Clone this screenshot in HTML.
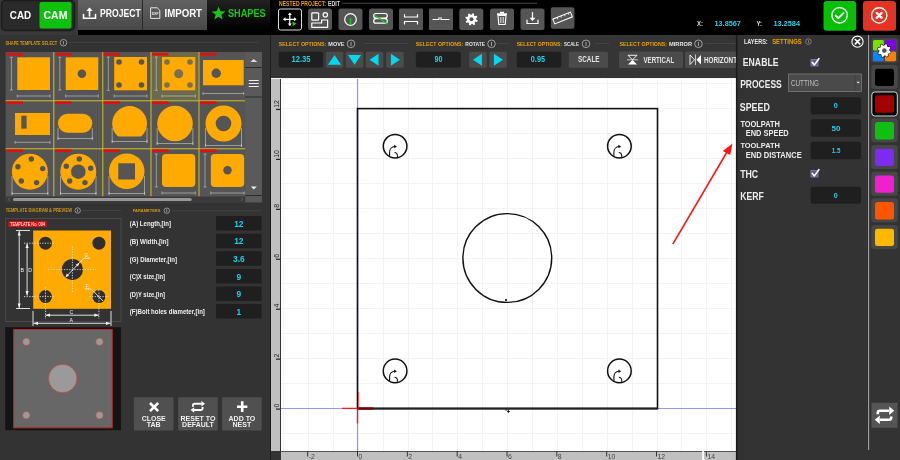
<!DOCTYPE html><html><head><meta charset="utf-8"><style>html,body{margin:0;padding:0;background:#333;overflow:hidden;width:900px;height:460px}svg{display:block;will-change:transform}text{font-family:"Liberation Sans",sans-serif}</style></head><body>
<svg width="900" height="460" viewBox="0 0 900 460">
<defs>
<linearGradient id="btn" x1="0" y1="0" x2="0" y2="1"><stop offset="0" stop-color="#626262"/><stop offset="1" stop-color="#484848"/></linearGradient>
<linearGradient id="shp" x1="0" y1="0" x2="0" y2="1"><stop offset="0" stop-color="#222"/><stop offset="1" stop-color="#000"/></linearGradient>
</defs>
<rect x="0" y="0" width="900" height="460" fill="#333"/>
<rect x="0" y="0" width="900" height="35" fill="#000"/>
<rect x="0" y="0" width="78" height="35" fill="#393939"/>
<rect x="1.5" y="0.5" width="73" height="30" rx="4" fill="#2a2a2a" stroke="#1c1c1c" stroke-width="1.5"/>
<rect x="39.5" y="2" width="32" height="26.5" rx="2" fill="#10c010"/>
<text x="9.8" y="18.8" font-size="11.48" font-weight="bold" fill="#fff" text-anchor="start" textLength="21.4" lengthAdjust="spacingAndGlyphs" >CAD</text>
<text x="43.5" y="18.8" font-size="11.48" font-weight="bold" fill="#fff" text-anchor="start" textLength="23.9" lengthAdjust="spacingAndGlyphs" >CAM</text>
<rect x="78" y="0" width="64" height="30" fill="url(#btn)"/>
<rect x="142" y="0" width="1" height="30" fill="#2a2a2a"/>
<rect x="143" y="0" width="64" height="30" fill="url(#btn)"/>
<rect x="207" y="0" width="63" height="30" fill="url(#shp)"/>
<g fill="none" stroke="#fff" stroke-width="1.6" stroke-linecap="round"><path d="M83.5 14.5 v3.8 h12 v-3.8"/><path d="M89.5 16 v-7"/></g>
<path d="M89.5 7.5 l-3.2 3.6 h6.4 z" fill="#fff"/>
<text x="100" y="16.9" font-size="10.32" font-weight="bold" fill="#fff" text-anchor="start" textLength="40.7" lengthAdjust="spacingAndGlyphs" >PROJECT</text>
<path d="M150.6 7.8 h6.6 l2.6 2.6 v8 h-9.2 z" fill="none" stroke="#e6e6e6" stroke-width="1"/>
<text x="155.2" y="14.8" font-size="3.6" font-weight="bold" fill="#eee" text-anchor="middle" textLength="6.6" lengthAdjust="spacingAndGlyphs">DXF</text>
<text x="164.5" y="16.9" font-size="10.32" font-weight="bold" fill="#fff" text-anchor="start" textLength="37.5" lengthAdjust="spacingAndGlyphs" >IMPORT</text>
<polygon points="218.50,6.60 220.26,11.37 225.35,11.58 221.35,14.73 222.73,19.62 218.50,16.80 214.27,19.62 215.65,14.73 211.65,11.58 216.74,11.37" fill="#18c818"/>
<text x="228" y="16.9" font-size="10.32" font-weight="bold" fill="#18c818" text-anchor="start" textLength="37.6" lengthAdjust="spacingAndGlyphs" >SHAPES</text>
<text x="279" y="5.6" font-size="6.4" font-weight="bold" fill="#e8a300" text-anchor="start" textLength="47" lengthAdjust="spacingAndGlyphs" >NESTED PROJECT:</text>
<text x="328" y="5.6" font-size="6.4" font-weight="bold" fill="#ddd" text-anchor="start" textLength="12" lengthAdjust="spacingAndGlyphs" >EDIT</text>
<rect x="342" y="2.8" width="195" height="0.8" fill="#555"/>
<rect x="278.5" y="9" width="23" height="21" rx="2" fill="#000" stroke="#ddd" stroke-width="1"/>
<rect x="308" y="8.5" width="24" height="21.5" rx="2.5" fill="#555"/>
<rect x="338.5" y="8.5" width="24" height="21.5" rx="2.5" fill="#555"/>
<rect x="369" y="8.5" width="24" height="21.5" rx="2.5" fill="#555"/>
<rect x="399" y="8.5" width="24" height="21.5" rx="1" fill="#555"/>
<rect x="429" y="8.5" width="24" height="21.5" rx="1" fill="#555"/>
<rect x="459.3" y="8.5" width="24" height="21.5" rx="2.5" fill="#555"/>
<rect x="490" y="8.5" width="24" height="21.5" rx="2.5" fill="#555"/>
<rect x="520.5" y="8.5" width="24" height="21.5" rx="2.5" fill="#555"/>
<rect x="550.8" y="7.3" width="23.6" height="21.5" rx="2" fill="#555"/>
<g fill="none" stroke="#fff" stroke-width="1.2" stroke-linecap="round" stroke-linejoin="round"><path d="M284 19.3 h11.6 M289.8 13.5 v11.6"/></g>
<g fill="#fff"><path d="M283 19.3 l2.5 -2 v4z M296.6 19.3 l-2.5 -2 v4z M289.8 12.5 l-2 2.5 h4z M289.8 26.1 l-2 -2.5 h4z"/></g>
<path d="M292.5 21.5 l4.2 2.2 l-4.2 2.2 z" fill="#18c818"/>
<g fill="none" stroke="#fff" stroke-width="1.2" stroke-linecap="round" stroke-linejoin="round"><rect x="311.8" y="12.8" width="6.8" height="7.4" rx="0.8"/><circle cx="325.3" cy="14.8" r="2.2"/><path d="M311.8 23 h9.8 v-3 h6 v7.3 h-15.8 z"/></g>
<g fill="none" stroke="#fff" stroke-width="1.2" stroke-linecap="round" stroke-linejoin="round"><circle cx="350.5" cy="19.5" r="5.8"/></g>
<path d="M350.5 19 v6" stroke="#18c818" stroke-width="1.5"/><circle cx="350.5" cy="19" r="1" fill="#18c818"/>
<g fill="none" stroke="#fff" stroke-width="1.2" stroke-linecap="round" stroke-linejoin="round"><path d="M376 13.5 h9 a2.3 2.3 0 0 1 0 4.6 h-9 a2.3 2.3 0 0 1 0 -4.6z M376 18.6 h9 a2.3 2.3 0 0 1 0 4.6 h-9 a2.3 2.3 0 0 1 0 -4.6z"/></g>
<path d="M374.5 15 l13 9" stroke="#18c818" stroke-width="1.3"/>
<g fill="none" stroke="#fff" stroke-width="1.2" stroke-linecap="round" stroke-linejoin="round"><path d="M404.5 14.5 v2.5 h13 v-2.5 M404.5 24 v-2.5 h13 v2.5"/></g>
<g fill="none" stroke="#fff" stroke-width="1.2" stroke-linecap="round" stroke-linejoin="round"><path d="M433 19.5 h6 v-1.8 M441 17.7 v1.8 h8"/></g>
<polygon points="477.67,20.55 477.31,21.73 475.32,21.87 474.74,22.56 474.98,24.55 473.89,25.13 472.38,23.81 471.48,23.90 470.25,25.47 469.07,25.11 468.93,23.12 468.24,22.54 466.25,22.78 465.67,21.69 466.99,20.18 466.90,19.28 465.33,18.05 465.69,16.87 467.68,16.73 468.26,16.04 468.02,14.05 469.11,13.47 470.62,14.79 471.52,14.70 472.75,13.13 473.93,13.49 474.07,15.48 474.76,16.06 476.75,15.82 477.33,16.91 476.01,18.42 476.10,19.32" fill="#fff"/>
<circle cx="471.5" cy="19.3" r="2.0" fill="#555"/>
<g fill="#fff"><rect x="497" y="13.3" width="10" height="1.6" rx="0.5"/><rect x="500" y="11.8" width="4" height="1.6"/></g>
<path d="M498 15.5 h8 l-0.8 9 h-6.4 z" fill="none" stroke="#fff" stroke-width="1.1"/>
<path d="M500.5 17 v6 M502 17 v6 M503.5 17 v6" stroke="#fff" stroke-width="0.6"/>
<g fill="none" stroke="#fff" stroke-width="1.2" stroke-linecap="round" stroke-linejoin="round"><path d="M527 20 v3.5 h11 v-3.5"/><path d="M532.5 12.5 v7"/></g>
<path d="M532.5 21 l-3 -3.3 h6 z" fill="#fff"/>
<g transform="translate(562.6,18) rotate(-22)"><rect x="-9.5" y="-2.6" width="19" height="5.2" fill="none" stroke="#fff" stroke-width="1"/><path d="M-5 -2.6 v2 M-1 -2.6 v2 M3 -2.6 v2 M7 -2.6 v2" stroke="#fff" stroke-width="0.7"/></g>
<text x="697" y="26.1" font-size="6.69" font-weight="bold" fill="#ddd" text-anchor="start" textLength="6" lengthAdjust="spacingAndGlyphs" >X:</text>
<text x="714.5" y="26.1" font-size="6.69" font-weight="bold" fill="#1fd0e8" text-anchor="start" textLength="26.4" lengthAdjust="spacingAndGlyphs" >13.8567</text>
<text x="756.4" y="26.1" font-size="6.69" font-weight="bold" fill="#ddd" text-anchor="start" textLength="5.6" lengthAdjust="spacingAndGlyphs" >Y:</text>
<text x="773.4" y="26.1" font-size="6.69" font-weight="bold" fill="#1fd0e8" text-anchor="start" textLength="26.6" lengthAdjust="spacingAndGlyphs" >13.2584</text>
<rect x="823.5" y="1" width="32.7" height="29.7" rx="3" fill="#06bf06"/>
<circle cx="839.6" cy="15.3" r="7.7" fill="none" stroke="#fff" stroke-width="1.4"/>
<path d="M835.6 15.6 l2.8 2.6 l5 -5" fill="none" stroke="#fff" stroke-width="1.9" stroke-linecap="round" stroke-linejoin="round"/>
<rect x="863" y="1" width="33" height="29.7" rx="3" fill="#e43322"/>
<circle cx="879.2" cy="15.4" r="7.7" fill="none" stroke="#fff" stroke-width="1.4"/>
<path d="M876.7 12.9 l5 5 M881.7 12.9 l-5 5" fill="none" stroke="#fff" stroke-width="2.2" stroke-linecap="round"/>
<rect x="270" y="35" width="1" height="425" fill="#1e1e1e"/>
<rect x="271" y="35" width="465" height="43" fill="#353535"/>
<text x="278.7" y="45.8" font-size="6.1" font-weight="bold" fill="#e8a300" text-anchor="start" textLength="47.6" lengthAdjust="spacingAndGlyphs" >SELECT OPTIONS:</text>
<text x="328.3" y="45.8" font-size="6.1" font-weight="bold" fill="#e6e6e6" text-anchor="start" textLength="16.2" lengthAdjust="spacingAndGlyphs" >MOVE</text>
<circle cx="351" cy="43.8" r="3.8" fill="none" stroke="#ccc" stroke-width="0.7"/>
<rect x="350.65" y="41.9" width="0.7" height="3.9899999999999998" fill="#ccc"/>
<rect x="364" y="43.1" width="44" height="0.7" fill="#4a4a4a"/>
<text x="415.8" y="45.8" font-size="6.1" font-weight="bold" fill="#e8a300" text-anchor="start" textLength="47.5" lengthAdjust="spacingAndGlyphs" >SELECT OPTIONS:</text>
<text x="465.3" y="45.8" font-size="6.1" font-weight="bold" fill="#e6e6e6" text-anchor="start" textLength="19.7" lengthAdjust="spacingAndGlyphs" >ROTATE</text>
<circle cx="491.5" cy="43.8" r="3.8" fill="none" stroke="#ccc" stroke-width="0.7"/>
<rect x="491.15" y="41.9" width="0.7" height="3.9899999999999998" fill="#ccc"/>
<rect x="497" y="43.1" width="12" height="0.7" fill="#4a4a4a"/>
<text x="516.7" y="45.8" font-size="6.1" font-weight="bold" fill="#e8a300" text-anchor="start" textLength="45.3" lengthAdjust="spacingAndGlyphs" >SELECT OPTIONS:</text>
<text x="564" y="45.8" font-size="6.1" font-weight="bold" fill="#e6e6e6" text-anchor="start" textLength="15" lengthAdjust="spacingAndGlyphs" >SCALE</text>
<circle cx="586" cy="43.8" r="3.8" fill="none" stroke="#ccc" stroke-width="0.7"/>
<rect x="585.65" y="41.9" width="0.7" height="3.9899999999999998" fill="#ccc"/>
<rect x="595" y="43.1" width="14" height="0.7" fill="#4a4a4a"/>
<text x="619.4" y="45.8" font-size="6.1" font-weight="bold" fill="#e8a300" text-anchor="start" textLength="47.6" lengthAdjust="spacingAndGlyphs" >SELECT OPTIONS:</text>
<text x="669" y="45.8" font-size="6.1" font-weight="bold" fill="#e6e6e6" text-anchor="start" textLength="23" lengthAdjust="spacingAndGlyphs" >MIRROR</text>
<circle cx="698.5" cy="43.8" r="3.8" fill="none" stroke="#ccc" stroke-width="0.7"/>
<rect x="698.15" y="41.9" width="0.7" height="3.9899999999999998" fill="#ccc"/>
<rect x="705" y="43.1" width="31" height="0.7" fill="#4a4a4a"/>
<rect x="278.7" y="51.7" width="44.30000000000001" height="15.799999999999997" rx="2" fill="#1f1f1f"/>
<text x="291.5" y="62.0" font-size="8.43" font-weight="bold" fill="#1fd0e8" text-anchor="start" textLength="19.0" lengthAdjust="spacingAndGlyphs" >12.35</text>
<rect x="325.8" y="51.7" width="17.5" height="16" rx="1.5" fill="#4b4b4b"/>
<path d="M327.95 64.7 L334.55 54.900000000000006 L341.15000000000003 64.7z" fill="#00d8f0"/>
<rect x="345.8" y="51.7" width="17.5" height="16" rx="1.5" fill="#4b4b4b"/>
<path d="M347.95 55.1 L354.55 64.7 L361.15000000000003 55.1z" fill="#00d8f0"/>
<rect x="365.8" y="51.7" width="17.5" height="16" rx="1.5" fill="#4b4b4b"/>
<path d="M378.55 53.7 L369.55 59.7 L378.55 65.7z" fill="#00d8f0"/>
<rect x="386.2" y="51.7" width="17.5" height="16" rx="1.5" fill="#4b4b4b"/>
<path d="M390.95 53.7 L399.95 59.7 L390.95 65.7z" fill="#00d8f0"/>
<rect x="415.8" y="51.7" width="45.0" height="15.799999999999997" rx="2" fill="#1f1f1f"/>
<text x="434.5" y="62.0" font-size="8.43" font-weight="bold" fill="#1fd0e8" text-anchor="start" textLength="8.0" lengthAdjust="spacingAndGlyphs" >90</text>
<rect x="469.2" y="51.7" width="17.5" height="16" rx="1.5" fill="#4b4b4b"/>
<path d="M481.95 53.7 L472.95 59.7 L481.95 65.7z" fill="#00d8f0"/>
<rect x="489.2" y="51.7" width="17.5" height="16" rx="1.5" fill="#4b4b4b"/>
<path d="M493.95 53.7 L502.95 59.7 L493.95 65.7z" fill="#00d8f0"/>
<rect x="516.7" y="51.7" width="44.59999999999991" height="15.799999999999997" rx="2" fill="#1f1f1f"/>
<text x="530.8" y="62.0" font-size="8.43" font-weight="bold" fill="#1fd0e8" text-anchor="start" textLength="14.2" lengthAdjust="spacingAndGlyphs" >0.95</text>
<rect x="568.8" y="51.7" width="39.2" height="16" rx="1.5" fill="#4b4b4b"/>
<text x="578" y="62.0" font-size="8.43" font-weight="bold" fill="#e6e6e6" text-anchor="start" textLength="21.5" lengthAdjust="spacingAndGlyphs" >SCALE</text>
<rect x="619" y="51.6" width="64" height="16.4" rx="1.5" fill="#4b4b4b"/>
<path d="M628 55.3 h9 l-4.5 4.5z" fill="none" stroke="#fff" stroke-width="0.9"/>
<path d="M627 59.8 h11" stroke="#fff" stroke-width="0.7"/>
<path d="M628 64.6 h9 l-4.5 -4.5z" fill="#fff"/>
<text x="643.5" y="62.5" font-size="8.43" font-weight="bold" fill="#e6e6e6" text-anchor="start" textLength="30.7" lengthAdjust="spacingAndGlyphs" >VERTICAL</text>
<clipPath id="optclip"><rect x="271" y="35" width="465" height="43"/></clipPath><g clip-path="url(#optclip)">
<rect x="685.1" y="51.6" width="60" height="16.4" rx="1.5" fill="#4b4b4b"/>
<path d="M690 55 v9.5 l4.5 -4.75z" fill="none" stroke="#fff" stroke-width="0.9"/>
<path d="M695.5 54.5 v10.5" stroke="#fff" stroke-width="0.7"/>
<path d="M701 55 v9.5 l-4.5 -4.75z" fill="#fff"/>
<text x="704" y="62.5" font-size="8.43" font-weight="bold" fill="#e6e6e6" text-anchor="start" textLength="41" lengthAdjust="spacingAndGlyphs" >HORIZONTAL</text>
</g>
<rect x="736.2" y="35" width="1" height="425" fill="#1e1e1e"/>
<rect x="271" y="78" width="465.5" height="382" fill="#fff"/>
<path d="M283.5 78V451 M308.5 78V451 M333.5 78V451 M358.5 78V451 M383.5 78V451 M408.5 78V451 M432.5 78V451 M457.5 78V451 M482.5 78V451 M507.5 78V451 M532.5 78V451 M557.5 78V451 M582.5 78V451 M607.5 78V451 M632.5 78V451 M657.5 78V451 M681.5 78V451 M706.5 78V451 M731.5 78V451 M281 433.5H736 M281 408.5H736 M281 383.5H736 M281 358.5H736 M281 333.5H736 M281 308.5H736 M281 283.5H736 M281 258.5H736 M281 233.5H736 M281 208.5H736 M281 183.5H736 M281 158.5H736 M281 133.5H736 M281 108.5H736 M281 83.5H736" stroke="#f3f3f3" stroke-width="1" fill="none"/>
<path d="M357.5 78V451 M281 408.5H736" stroke="#9494ff" stroke-width="1.2" fill="none"/>
<rect x="357.5" y="108.6" width="300" height="300" fill="none" stroke="#111" stroke-width="1.6"/><path d="M357.5 408.5 H657.5" stroke="#222" stroke-width="2.2"/>
<circle cx="507.3" cy="258" r="44.4" fill="none" stroke="#111" stroke-width="1.4"/>
<circle cx="395.1" cy="146.2" r="11.8" fill="none" stroke="#111" stroke-width="1.5"/>
<path d="M389.6 156.7 V152.0 A5.5 5.5 0 0 1 394.6 146.5" fill="none" stroke="#111" stroke-width="1.1"/>
<path d="M396.90000000000003 146.5 L393.90000000000003 144.7 L394.3 148.2z" fill="#111"/>
<path d="M394.5 152.5 A2.8 2.8 0 0 1 397.40000000000003 155.39999999999998 V157.0" fill="none" stroke="#111" stroke-width="1.1"/>
<circle cx="619.4" cy="146.2" r="11.8" fill="none" stroke="#111" stroke-width="1.5"/>
<path d="M613.9 156.7 V152.0 A5.5 5.5 0 0 1 618.9 146.5" fill="none" stroke="#111" stroke-width="1.1"/>
<path d="M621.1999999999999 146.5 L618.1999999999999 144.7 L618.6 148.2z" fill="#111"/>
<path d="M618.8 152.5 A2.8 2.8 0 0 1 621.6999999999999 155.39999999999998 V157.0" fill="none" stroke="#111" stroke-width="1.1"/>
<circle cx="395.1" cy="370.9" r="11.8" fill="none" stroke="#111" stroke-width="1.5"/>
<path d="M389.6 381.4 V376.7 A5.5 5.5 0 0 1 394.6 371.2" fill="none" stroke="#111" stroke-width="1.1"/>
<path d="M396.90000000000003 371.2 L393.90000000000003 369.4 L394.3 372.9z" fill="#111"/>
<path d="M394.5 377.2 A2.8 2.8 0 0 1 397.40000000000003 380.09999999999997 V381.7" fill="none" stroke="#111" stroke-width="1.1"/>
<circle cx="619.4" cy="370.9" r="11.8" fill="none" stroke="#111" stroke-width="1.5"/>
<path d="M613.9 381.4 V376.7 A5.5 5.5 0 0 1 618.9 371.2" fill="none" stroke="#111" stroke-width="1.1"/>
<path d="M621.1999999999999 371.2 L618.1999999999999 369.4 L618.6 372.9z" fill="#111"/>
<path d="M618.8 377.2 A2.8 2.8 0 0 1 621.6999999999999 380.09999999999997 V381.7" fill="none" stroke="#111" stroke-width="1.1"/>
<circle cx="506" cy="300" r="1.1" fill="#111"/>
<path d="M505 410 h2.5 M508.5 409.5 v2.2" stroke="#111" stroke-width="0.8"/><path d="M506.8 411 h3.4 l-1.7 2z" fill="#111"/>
<path d="M342 408.4 H357.5 M357.5 408.5 V423.6" stroke="#ff1a1a" stroke-width="1.4" fill="none"/>
<path d="M358.6 392 V408" stroke="#ff3030" stroke-width="0.8" fill="none"/>
<path d="M357.5 408.5 H373.5" stroke="#7a0000" stroke-width="2.2" fill="none"/>
<path d="M672.8 244.2 L727 152" stroke="#ff1414" stroke-width="1.6" fill="none"/>
<path d="M732.5 143.5 L722.8 151 L730.2 155z" fill="#ff1414"/>
<rect x="271" y="79" width="9" height="372" fill="#c0c0c0"/>
<rect x="280" y="79" width="1" height="372" fill="#333"/>
<rect x="271" y="78" width="465" height="1" fill="#f4f4f4"/>
<rect x="281" y="451" width="455" height="1" fill="#555"/>
<rect x="281" y="452" width="455" height="8" fill="#c0c0c0"/>
<rect x="271" y="451" width="10" height="9" fill="#333"/>
<rect x="276" y="108.86" width="4" height="1.2" fill="#222"/>
<text x="0" y="0" font-size="7" fill="#222" transform="translate(279,107.86) rotate(-90)">12</text>
<rect x="276" y="158.8" width="4" height="1.2" fill="#222"/>
<text x="0" y="0" font-size="7" fill="#222" transform="translate(279,157.8) rotate(-90)">10</text>
<rect x="276" y="208.74" width="4" height="1.2" fill="#222"/>
<text x="0" y="0" font-size="7" fill="#222" transform="translate(279,207.74) rotate(-90)">8</text>
<rect x="276" y="258.68" width="4" height="1.2" fill="#222"/>
<text x="0" y="0" font-size="7" fill="#222" transform="translate(279,257.68) rotate(-90)">6</text>
<rect x="276" y="308.62" width="4" height="1.2" fill="#222"/>
<text x="0" y="0" font-size="7" fill="#222" transform="translate(279,307.62) rotate(-90)">4</text>
<rect x="276" y="358.56" width="4" height="1.2" fill="#222"/>
<text x="0" y="0" font-size="7" fill="#222" transform="translate(279,357.56) rotate(-90)">2</text>
<rect x="276" y="408.5" width="4" height="1.2" fill="#222"/>
<text x="0" y="0" font-size="7" fill="#222" transform="translate(279,407.5) rotate(-90)">0</text>
<rect x="307.16" y="451" width="1" height="5.5" fill="#333"/>
<text x="308.66" y="459.2" font-size="6.8" fill="#444">-2</text>
<rect x="357.0" y="451" width="1" height="5.5" fill="#333"/>
<text x="358.5" y="459.2" font-size="6.8" fill="#444">0</text>
<rect x="406.84" y="451" width="1" height="5.5" fill="#333"/>
<text x="408.34" y="459.2" font-size="6.8" fill="#444">2</text>
<rect x="456.68" y="451" width="1" height="5.5" fill="#333"/>
<text x="458.18" y="459.2" font-size="6.8" fill="#444">4</text>
<rect x="506.52" y="451" width="1" height="5.5" fill="#333"/>
<text x="508.02" y="459.2" font-size="6.8" fill="#444">6</text>
<rect x="556.36" y="451" width="1" height="5.5" fill="#333"/>
<text x="557.86" y="459.2" font-size="6.8" fill="#444">8</text>
<rect x="606.2" y="451" width="1" height="5.5" fill="#333"/>
<text x="607.7" y="459.2" font-size="6.8" fill="#444">10</text>
<rect x="656.04" y="451" width="1" height="5.5" fill="#333"/>
<text x="657.54" y="459.2" font-size="6.8" fill="#444">12</text>
<rect x="705.88" y="451" width="1" height="5.5" fill="#333"/>
<text x="707.38" y="459.2" font-size="6.8" fill="#444">14</text>
<rect x="702.2" y="451" width="1.7" height="9" fill="#fff"/>
<rect x="737" y="35" width="131" height="425" fill="#333"/>
<rect x="735.9" y="35" width="1.5" height="425" fill="#1c1c1c"/>
<rect x="868" y="35" width="1.4" height="415" fill="#9a9a9a"/>
<text x="744" y="44" font-size="6.98" font-weight="bold" fill="#e6e6e6" text-anchor="start" textLength="23.7" lengthAdjust="spacingAndGlyphs" >LAYERS:</text>
<text x="772.2" y="44" font-size="6.98" font-weight="bold" fill="#e8a300" text-anchor="start" textLength="29.5" lengthAdjust="spacingAndGlyphs" >SETTINGS</text>
<circle cx="808.4" cy="41.6" r="2.8" fill="none" stroke="#999" stroke-width="0.7"/>
<rect x="808.05" y="40.2" width="0.7" height="2.94" fill="#999"/>
<circle cx="857.5" cy="41.7" r="5.6" fill="none" stroke="#fff" stroke-width="1.1"/>
<path d="M855.3 39.5 l4.4 4.4 M859.7 39.5 l-4.4 4.4" stroke="#fff" stroke-width="1.6" stroke-linecap="round"/>
<text x="742.8" y="65.7" font-size="10.17" font-weight="bold" fill="#ececec" text-anchor="start" textLength="35.7" lengthAdjust="spacingAndGlyphs" >ENABLE</text>
<rect x="811" y="59.5" width="7" height="6.5" fill="#5a5a8c" stroke="#8080b8" stroke-width="0.8"/>
<path d="M812.2 62.3 l2.2 2.6 l4.5 -6.2" fill="none" stroke="#fff" stroke-width="1.6" stroke-linecap="round" stroke-linejoin="round"/>
<text x="740.2" y="88.2" font-size="10.9" font-weight="bold" fill="#ececec" text-anchor="start" textLength="41.6" lengthAdjust="spacingAndGlyphs" >PROCESS</text>
<rect x="788.5" y="74" width="73" height="17.5" fill="#4a4a4a" stroke="#7a7a7a" stroke-width="0.8"/>
<rect x="854.8" y="74.5" width="0.6" height="16.5" fill="#3a3a3a"/>
<path d="M856.5 81.8 h3.4 l-1.7 1.8z" fill="#eee"/>
<text x="791" y="85.5" font-size="8.72" font-weight="normal" fill="#bdbdbd" text-anchor="start" textLength="28" lengthAdjust="spacingAndGlyphs" >CUTTING</text>
<text x="739.8" y="110.7" font-size="10.9" font-weight="bold" fill="#ececec" text-anchor="start" textLength="30.0" lengthAdjust="spacingAndGlyphs" >SPEED</text>
<rect x="810.7" y="97.2" width="50.3" height="17.299999999999997" rx="2" fill="#1f1f1f"/>
<text x="833.8" y="108.44999999999999" font-size="7.56" font-weight="bold" fill="#1fd0e8" text-anchor="start" textLength="4.0" lengthAdjust="spacingAndGlyphs" >0</text>
<text x="740.4" y="126.5" font-size="8.28" font-weight="bold" fill="#ececec" text-anchor="start" textLength="39.6" lengthAdjust="spacingAndGlyphs" >TOOLPATH</text>
<text x="745.8" y="135.8" font-size="8.14" font-weight="bold" fill="#ececec" text-anchor="start" textLength="42.9" lengthAdjust="spacingAndGlyphs" >END SPEED</text>
<rect x="810.7" y="119.3" width="50.3" height="17.39999999999999" rx="2" fill="#1f1f1f"/>
<text x="831.5" y="130.6" font-size="7.56" font-weight="bold" fill="#1fd0e8" text-anchor="start" textLength="9.0" lengthAdjust="spacingAndGlyphs" >50</text>
<text x="740.4" y="148.2" font-size="7.99" font-weight="bold" fill="#ececec" text-anchor="start" textLength="39.6" lengthAdjust="spacingAndGlyphs" >TOOLPATH</text>
<text x="745.8" y="157.8" font-size="8.43" font-weight="bold" fill="#ececec" text-anchor="start" textLength="55.9" lengthAdjust="spacingAndGlyphs" >END DISTANCE</text>
<rect x="810.7" y="141.8" width="50.3" height="17.399999999999977" rx="2" fill="#1f1f1f"/>
<text x="831.8" y="153.1" font-size="7.56" font-weight="bold" fill="#1fd0e8" text-anchor="start" textLength="8.7" lengthAdjust="spacingAndGlyphs" >1.5</text>
<text x="740.2" y="177.8" font-size="10.76" font-weight="bold" fill="#ececec" text-anchor="start" textLength="18.0" lengthAdjust="spacingAndGlyphs" >THC</text>
<rect x="811" y="170.5" width="7" height="6.5" fill="#5a5a8c" stroke="#8080b8" stroke-width="0.8"/>
<path d="M812.2 173.3 l2.2 2.6 l4.5 -6.2" fill="none" stroke="#fff" stroke-width="1.6" stroke-linecap="round" stroke-linejoin="round"/>
<text x="740.2" y="200" font-size="10.9" font-weight="bold" fill="#ececec" text-anchor="start" textLength="23.6" lengthAdjust="spacingAndGlyphs" >KERF</text>
<rect x="810.7" y="186.8" width="50.3" height="16.899999999999977" rx="2" fill="#1f1f1f"/>
<text x="833.8" y="197.85" font-size="7.56" font-weight="bold" fill="#1fd0e8" text-anchor="start" textLength="4.0" lengthAdjust="spacingAndGlyphs" >0</text>
<rect x="869.4" y="35" width="30.6" height="425" fill="#333"/>
<rect x="871.3" y="38.2" width="26.5" height="24.4" rx="2.5" fill="#474747"/>
<rect x="873" y="40" width="10.8" height="10.5" rx="1.5" fill="#78e000"/>
<rect x="885" y="40" width="11" height="10.5" rx="1.5" fill="#8000f0"/>
<rect x="873" y="51.5" width="10.8" height="9.8" rx="1.5" fill="#0a84ff"/>
<rect x="885" y="51.5" width="11" height="9.8" rx="1.5" fill="#ff8000"/>
<polygon points="890.77,51.91 890.39,53.15 888.45,53.39 887.82,54.15 887.95,56.10 886.80,56.71 885.26,55.51 884.28,55.60 882.99,57.07 881.75,56.69 881.51,54.75 880.75,54.12 878.80,54.25 878.19,53.10 879.39,51.56 879.30,50.58 877.83,49.29 878.21,48.05 880.15,47.81 880.78,47.05 880.65,45.10 881.80,44.49 883.34,45.69 884.32,45.60 885.61,44.13 886.85,44.51 887.09,46.45 887.85,47.08 889.80,46.95 890.41,48.10 889.21,49.64 889.30,50.62" fill="#111" stroke="#111" stroke-width="1.4" stroke-linejoin="round" opacity="0.85"/>
<polygon points="890.77,51.91 890.39,53.15 888.45,53.39 887.82,54.15 887.95,56.10 886.80,56.71 885.26,55.51 884.28,55.60 882.99,57.07 881.75,56.69 881.51,54.75 880.75,54.12 878.80,54.25 878.19,53.10 879.39,51.56 879.30,50.58 877.83,49.29 878.21,48.05 880.15,47.81 880.78,47.05 880.65,45.10 881.80,44.49 883.34,45.69 884.32,45.60 885.61,44.13 886.85,44.51 887.09,46.45 887.85,47.08 889.80,46.95 890.41,48.10 889.21,49.64 889.30,50.62" fill="#fff"/>
<circle cx="884.3" cy="50.6" r="2.3" fill="#555"/>
<rect x="871.3" y="65.0" width="26.5" height="24" rx="3" fill="#474747"/>
<rect x="875" y="68.7" width="19" height="17.4" rx="2.5" fill="#000000"/>
<rect x="871.8" y="91.97" width="25.5" height="24" rx="3" fill="#000" stroke="#d8d8d8" stroke-width="1"/>
<rect x="875" y="95.37" width="19" height="17.4" rx="2.5" fill="#a40000"/>
<rect x="871.3" y="118.34" width="26.5" height="24" rx="3" fill="#474747"/>
<rect x="875" y="122.04" width="19" height="17.4" rx="2.5" fill="#10c010"/>
<rect x="871.3" y="145.01" width="26.5" height="24" rx="3" fill="#474747"/>
<rect x="875" y="148.70999999999998" width="19" height="17.4" rx="2.5" fill="#7b2cf0"/>
<rect x="871.3" y="171.68" width="26.5" height="24" rx="3" fill="#474747"/>
<rect x="875" y="175.38" width="19" height="17.4" rx="2.5" fill="#f020d0"/>
<rect x="871.3" y="198.35" width="26.5" height="24" rx="3" fill="#474747"/>
<rect x="875" y="202.04999999999998" width="19" height="17.4" rx="2.5" fill="#ff5500"/>
<rect x="871.3" y="225.02" width="26.5" height="24" rx="3" fill="#474747"/>
<rect x="875" y="228.72" width="19" height="17.4" rx="2.5" fill="#ffb800"/>
<rect x="871.5" y="402.8" width="26" height="25" fill="#555"/>
<g fill="none" stroke="#fff" stroke-width="2.6" stroke-linejoin="round"><path d="M889 410.8 h-9 a2.2 2.2 0 0 0 -2.2 2.2 v1.2"/><path d="M880 419.8 h9 a2.2 2.2 0 0 0 2.2 -2.2 v-1.2"/></g>
<path d="M894.2 410.8 l-5 -4.2 v8.4z M874.8 419.8 l5 -4.2 v8.4z" fill="#fff"/>
<text x="5.4" y="44.6" font-size="5.38" font-weight="bold" fill="#d49a10" text-anchor="start" textLength="51.8" lengthAdjust="spacingAndGlyphs" >SHAPE TEMPLATE SELECT</text>
<circle cx="63.5" cy="42.7" r="3.3" fill="none" stroke="#bbb" stroke-width="0.7"/>
<rect x="63.15" y="41.050000000000004" width="0.7" height="3.465" fill="#bbb"/>
<rect x="69" y="42.4" width="189" height="0.7" fill="#4a4a4a"/>
<rect x="5.6" y="52" width="256.4" height="150.3" fill="#555"/>
<rect x="151" y="52" width="47.5" height="48.5" fill="#6b6a4c"/>
<rect x="53.3" y="52" width="1" height="144.5" fill="#c8c22a"/>
<rect x="102.3" y="52" width="1" height="144.5" fill="#c8c22a"/>
<rect x="150.5" y="52" width="1" height="144.5" fill="#c8c22a"/>
<rect x="198.5" y="52" width="1" height="144.5" fill="#c8c22a"/>
<rect x="5.6" y="100.3" width="239.6" height="1" fill="#c8c22a"/>
<rect x="5.6" y="148.3" width="239.6" height="1" fill="#c8c22a"/>
<rect x="245.3" y="52" width="16.5" height="150.3" fill="#5a5a5a"/>
<rect x="245.3" y="67" width="16.5" height="1" fill="#2a2a2a"/>
<rect x="245.3" y="96.5" width="16.5" height="1" fill="#2a2a2a"/>
<rect x="245.3" y="195" width="16.5" height="1" fill="#2a2a2a"/>
<path d="M250.3 62 h7 l-3.5 -3z" fill="#ddd"/>
<path d="M248.8 80.5 h10 M248.8 83.5 h10 M248.8 86.5 h10" stroke="#eee" stroke-width="1.1"/>
<path d="M250.8 186.5 h6 l-3 3z" fill="#eee"/>
<rect x="5.6" y="196.5" width="239.7" height="5.8" fill="#3a3a3a"/>
<rect x="13" y="198" width="178.7" height="3" rx="1.5" fill="#969696"/>
<path d="M10 197.8 l-1.8 1.6 l1.8 1.6" fill="none" stroke="#777" stroke-width="0.6"/>
<path d="M241 197.8 l1.8 1.6 l-1.8 1.6" fill="none" stroke="#777" stroke-width="0.6"/>
<rect x="6.6" y="52.9" width="16.4" height="2.7" fill="#e01010"/>
<rect x="55.1" y="52.9" width="16.4" height="2.7" fill="#e01010"/>
<rect x="103.6" y="52.9" width="16.4" height="2.7" fill="#e01010"/>
<rect x="152.1" y="52.9" width="16.4" height="2.7" fill="#e01010"/>
<rect x="200.1" y="52.9" width="16.4" height="2.7" fill="#e01010"/>
<rect x="6.6" y="101.4" width="16.4" height="2.7" fill="#e01010"/>
<rect x="55.1" y="101.4" width="16.4" height="2.7" fill="#e01010"/>
<rect x="103.6" y="101.4" width="16.4" height="2.7" fill="#e01010"/>
<rect x="152.1" y="101.4" width="16.4" height="2.7" fill="#e01010"/>
<rect x="200.1" y="101.4" width="16.4" height="2.7" fill="#e01010"/>
<rect x="6.6" y="149.4" width="16.4" height="2.7" fill="#e01010"/>
<rect x="55.1" y="149.4" width="16.4" height="2.7" fill="#e01010"/>
<rect x="103.6" y="149.4" width="16.4" height="2.7" fill="#e01010"/>
<rect x="152.1" y="149.4" width="16.4" height="2.7" fill="#e01010"/>
<rect x="200.1" y="149.4" width="16.4" height="2.7" fill="#e01010"/>
<rect x="17.3" y="57.3" width="32.7" height="32.7" fill="#ffaa00"/>
<path d="M11.4 57.3 V90 M9.9 57.3 h3 M9.9 90 h3" stroke="#e0e0e0" stroke-width="0.5" fill="none"/>
<path d="M17.3 96 H50 M17.3 94.5 v3 M50 94.5 v3" stroke="#e0e0e0" stroke-width="0.5" fill="none"/>
<rect x="65.7" y="57.3" width="32.6" height="32.7" fill="#ffaa00"/>
<circle cx="81.9" cy="73.7" r="4.3" fill="#555"/>
<path d="M59.8 57.3 V90 M58.3 57.3 h3 M58.3 90 h3" stroke="#e0e0e0" stroke-width="0.5" fill="none"/>
<path d="M65.7 96 H98.3 M65.7 94.5 v3 M98.3 94.5 v3" stroke="#e0e0e0" stroke-width="0.5" fill="none"/>
<rect x="114.2" y="57" width="32.8" height="33.3" fill="#ffaa00"/>
<circle cx="119" cy="62" r="2.8" fill="#555"/>
<circle cx="141.5" cy="62" r="2.8" fill="#555"/>
<circle cx="119" cy="85" r="2.8" fill="#555"/>
<circle cx="141.5" cy="85" r="2.8" fill="#555"/>
<path d="M108.3 57 V90.3 M106.8 57 h3 M106.8 90.3 h3" stroke="#e0e0e0" stroke-width="0.5" fill="none"/>
<path d="M114.2 96 H147 M114.2 94.5 v3 M147 94.5 v3" stroke="#e0e0e0" stroke-width="0.5" fill="none"/>
<rect x="162" y="57" width="33.3" height="33.3" fill="#ffaa00"/>
<circle cx="167" cy="62" r="2.8" fill="#777055"/>
<circle cx="190" cy="62" r="2.8" fill="#777055"/>
<circle cx="167" cy="85" r="2.8" fill="#777055"/>
<circle cx="190" cy="85" r="2.8" fill="#777055"/>
<circle cx="178.7" cy="73.7" r="4.5" fill="#777055"/>
<path d="M156.3 57 V90.3 M154.8 57 h3 M154.8 90.3 h3" stroke="#e0e0e0" stroke-width="0.5" fill="none"/>
<path d="M162 96 H195.3 M162 94.5 v3 M195.3 94.5 v3" stroke="#e0e0e0" stroke-width="0.5" fill="none"/>
<rect x="203" y="60" width="40.7" height="25.3" fill="#ffaa00"/>
<circle cx="216.2" cy="73.3" r="4.7" fill="#555"/>
<path d="M203 93.5 H243.7 M203 92.0 v3 M243.7 92.0 v3" stroke="#e0e0e0" stroke-width="0.5" fill="none"/>
<rect x="15" y="113" width="35" height="22" fill="#ffaa00"/>
<rect x="21.3" y="115.7" width="5.3" height="13" fill="#555"/>
<path d="M15 142.3 H50 M15 140.8 v3 M50 140.8 v3" stroke="#e0e0e0" stroke-width="0.5" fill="none"/>
<rect x="58" y="113.7" width="34.3" height="19" rx="9.5" fill="#ffaa00"/>
<path d="M58 138.5 H92.3 M58 137.0 v3 M92.3 137.0 v3" stroke="#e0e0e0" stroke-width="0.5" fill="none"/>
<path d="M58 128 V139.5 M92.3 128 V139.5" stroke="#e0e0e0" stroke-width="0.5" fill="none"/>
<clipPath id="c8"><rect x="100" y="100" width="50" height="36.4"/></clipPath><circle cx="129.6" cy="123.5" r="17.4" fill="#ffaa00" clip-path="url(#c8)"/>
<path d="M112.2 141.5 H147 M112.2 140.0 v3 M147 140.0 v3" stroke="#e0e0e0" stroke-width="0.5" fill="none"/>
<path d="M112.2 128 V142.5 M147 128 V142.5" stroke="#e0e0e0" stroke-width="0.5" fill="none"/>
<circle cx="175" cy="123.5" r="17.8" fill="#ffaa00"/>
<path d="M157.2 143.5 H192.8 M157.2 142.0 v3 M192.8 142.0 v3" stroke="#e0e0e0" stroke-width="0.5" fill="none"/>
<path d="M157.2 128 V144.5 M192.8 128 V144.5" stroke="#e0e0e0" stroke-width="0.5" fill="none"/>
<circle cx="223.5" cy="123.5" r="18" fill="#ffaa00"/><circle cx="223.5" cy="123.5" r="7.8" fill="#555"/>
<path d="M205.5 145.5 H241.5 M205.5 144.0 v3 M241.5 144.0 v3" stroke="#e0e0e0" stroke-width="0.5" fill="none"/>
<path d="M205.5 128 V146.5 M241.5 128 V146.5" stroke="#e0e0e0" stroke-width="0.5" fill="none"/>
<circle cx="29.9" cy="171.7" r="18" fill="#ffaa00"/>
<circle cx="31.3" cy="159" r="2.7" fill="#555"/>
<circle cx="17.9" cy="166.7" r="2.7" fill="#555"/>
<circle cx="42.7" cy="168.6" r="2.7" fill="#555"/>
<circle cx="21.3" cy="181" r="2.7" fill="#555"/>
<circle cx="36.6" cy="182.6" r="2.7" fill="#555"/>
<path d="M12 193.5 H47.8 M12 192.0 v3 M47.8 192.0 v3" stroke="#e0e0e0" stroke-width="0.5" fill="none"/>
<path d="M12 176 V194.5 M47.8 176 V194.5" stroke="#e0e0e0" stroke-width="0.5" fill="none"/>
<circle cx="78.3" cy="171.7" r="18" fill="#ffaa00"/><circle cx="78.3" cy="171.7" r="7.3" fill="#555"/>
<circle cx="79.3" cy="159" r="2.7" fill="#555"/>
<circle cx="66.3" cy="166.3" r="2.7" fill="#555"/>
<circle cx="90.7" cy="168.2" r="2.7" fill="#555"/>
<circle cx="69.7" cy="181" r="2.7" fill="#555"/>
<circle cx="85" cy="182.6" r="2.7" fill="#555"/>
<path d="M60.5 193.5 H96 M60.5 192.0 v3 M96 192.0 v3" stroke="#e0e0e0" stroke-width="0.5" fill="none"/>
<path d="M60.5 176 V194.5 M96 176 V194.5" stroke="#e0e0e0" stroke-width="0.5" fill="none"/>
<circle cx="126.7" cy="171.2" r="17.8" fill="#ffaa00"/><rect x="118.3" y="163.3" width="16.7" height="16.2" fill="#555"/>
<path d="M109 193.5 H144.5 M109 192.0 v3 M144.5 192.0 v3" stroke="#e0e0e0" stroke-width="0.5" fill="none"/>
<path d="M109 176 V194.5 M144.5 176 V194.5" stroke="#e0e0e0" stroke-width="0.5" fill="none"/>
<rect x="162" y="154" width="33.3" height="33" rx="4" fill="#ffaa00"/>
<path d="M156.3 154 V187 M154.8 154 h3 M154.8 187 h3" stroke="#e0e0e0" stroke-width="0.5" fill="none"/>
<path d="M162 193 H195.3 M162 191.5 v3 M195.3 191.5 v3" stroke="#e0e0e0" stroke-width="0.5" fill="none"/>
<rect x="210.8" y="154" width="33.4" height="33" rx="4" fill="#ffaa00"/><circle cx="227.5" cy="170.3" r="4.2" fill="#555"/>
<path d="M205 154 V187 M203.5 154 h3 M203.5 187 h3" stroke="#e0e0e0" stroke-width="0.5" fill="none"/>
<path d="M210.8 193 H244.2 M210.8 191.5 v3 M244.2 191.5 v3" stroke="#e0e0e0" stroke-width="0.5" fill="none"/>
<text x="5.7" y="212.1" font-size="5.09" font-weight="bold" fill="#d49a10" text-anchor="start" textLength="66.3" lengthAdjust="spacingAndGlyphs" >TEMPLATE DIAGRAM &amp; PREVIEW</text>
<circle cx="77.7" cy="210.5" r="2.7" fill="none" stroke="#bbb" stroke-width="0.7"/>
<rect x="77.35000000000001" y="209.15" width="0.7" height="2.8350000000000004" fill="#bbb"/>
<rect x="82" y="210.2" width="39" height="0.7" fill="#4a4a4a"/>
<rect x="5.7" y="218.4" width="115.3" height="103" fill="none" stroke="#505050" stroke-width="0.8"/>
<rect x="8.5" y="221.2" width="38.1" height="5.7" fill="#e80c0c"/>
<text x="10" y="225.9" font-size="5.23" font-weight="normal" fill="#fff" text-anchor="start" textLength="35" lengthAdjust="spacingAndGlyphs" >TEMPLATE No. 004</text>
<rect x="33.2" y="230.5" width="77.8" height="78.3" fill="#ffaa00"/>
<circle cx="45.5" cy="243.2" r="6.5" fill="#2e2e2e"/>
<circle cx="98.9" cy="243.2" r="6.5" fill="#2e2e2e"/>
<circle cx="45.5" cy="296.6" r="6.5" fill="#2e2e2e"/>
<circle cx="98.9" cy="296.6" r="6.5" fill="#2e2e2e"/>
<circle cx="72.4" cy="269.6" r="10.6" fill="#2e2e2e"/>
<path d="M24 243.2 H54 M24 296.6 H54 M89.4 296.6 H108.6 M45.5 287.4 V319 M98.9 290 V319 M72.4 246.3 V293 M48.3 269.6 H95.8" stroke="#f2f2f2" stroke-width="0.8" fill="none" stroke-dasharray="1.3 1.3"/>
<path d="M30 230.5 H16 M30 308.5 H16" stroke="#f2f2f2" stroke-width="0.9" fill="none"/>
<path d="M19.2 231 V308 M27.1 243.5 V295.5 M45.5 315.2 H98.8 M33.5 323.3 H110.5 M33 311 V326 M111 311 V326" stroke="#f2f2f2" stroke-width="0.9" fill="none"/>
<g fill="#f2f2f2"><path d="M19.2 231 l-1.6 4.5 h3.2z M19.2 308 l-1.6 -4.5 h3.2z M27.1 243.5 l-1.6 4.5 h3.2z M27.1 295.5 l-1.6 -4.5 h3.2z M45.5 315.2 l4.5 -1.6 v3.2z M98.8 315.2 l-4.5 -1.6 v3.2z M33.5 323.3 l4.5 -1.6 v3.2z M110.5 323.3 l-4.5 -1.6 v3.2z"/></g>
<path d="M66.5 276.3 L83.9 258.2 H90.3" stroke="#f2f2f2" stroke-width="0.9" fill="none"/>
<path d="M65.6 277.2 l1.2 -3.6 l2.2 2.2z M79.2 263 l-1.2 3.6 l-2.2 -2.2z" fill="#f2f2f2"/>
<path d="M84.8 288.9 H91.2 L103.1 301.1" stroke="#f2f2f2" stroke-width="0.9" fill="none"/>
<g font-size="5.2" fill="#f2f2f2">
<text x="20.5" y="271.5">B</text><text x="28.3" y="271.5">D</text><text x="69.5" y="313.5">C</text><text x="69.5" y="322">A</text><text x="84.5" y="257.3">G</text><text x="85.5" y="288.2">F</text>
</g>
<rect x="5.2" y="327.2" width="115.8" height="103" fill="#141414"/>
<rect x="13.7" y="329.5" width="98.5" height="98.3" fill="#676767" stroke="#c42828" stroke-width="1"/>
<circle cx="26.3" cy="341.8" r="3.8" fill="#9a9a9a" stroke="#c83a3a" stroke-width="0.6"/>
<circle cx="99.5" cy="341.8" r="3.8" fill="#9a9a9a" stroke="#c83a3a" stroke-width="0.6"/>
<circle cx="26.3" cy="415.2" r="3.8" fill="#9a9a9a" stroke="#c83a3a" stroke-width="0.6"/>
<circle cx="99.5" cy="415.2" r="3.8" fill="#9a9a9a" stroke="#c83a3a" stroke-width="0.6"/>
<circle cx="62.7" cy="378.5" r="14.3" fill="#9a9a9a" stroke="#c83a3a" stroke-width="0.7"/>
<text x="132.7" y="212.3" font-size="4.36" font-weight="bold" fill="#d49a10" text-anchor="start" textLength="27.7" lengthAdjust="spacingAndGlyphs" >PARAMETERS</text>
<circle cx="166.8" cy="210.7" r="2.7" fill="none" stroke="#bbb" stroke-width="0.7"/>
<rect x="166.45000000000002" y="209.35" width="0.7" height="2.8350000000000004" fill="#bbb"/>
<rect x="172" y="210.5" width="89" height="0.7" fill="#4a4a4a"/>
<rect x="216" y="216.1" width="45.6" height="14.5" rx="1" fill="#1f1f1f"/>
<text x="129.8" y="226.4" font-size="7.3" font-weight="bold" fill="#f0f0f0" text-anchor="start" textLength="41.2" lengthAdjust="spacingAndGlyphs" >(A) Length,[in]</text>
<text x="238.8" y="226.7" font-size="8.4" font-weight="bold" fill="#1fd0e8" text-anchor="middle" >12</text>
<rect x="216" y="233.7" width="45.6" height="14.5" rx="1" fill="#1f1f1f"/>
<text x="129.8" y="244.0" font-size="7.3" font-weight="bold" fill="#f0f0f0" text-anchor="start" textLength="38.8" lengthAdjust="spacingAndGlyphs" >(B) Width,[in]</text>
<text x="238.8" y="244.29999999999998" font-size="8.4" font-weight="bold" fill="#1fd0e8" text-anchor="middle" >12</text>
<rect x="216" y="251.3" width="45.6" height="14.5" rx="1" fill="#1f1f1f"/>
<text x="129.8" y="261.6" font-size="7.3" font-weight="bold" fill="#f0f0f0" text-anchor="start" textLength="47.2" lengthAdjust="spacingAndGlyphs" >(G) Diameter,[in]</text>
<text x="238.8" y="261.90000000000003" font-size="8.4" font-weight="bold" fill="#1fd0e8" text-anchor="middle" >3.6</text>
<rect x="216" y="268.9" width="45.6" height="14.5" rx="1" fill="#1f1f1f"/>
<text x="129.8" y="279.2" font-size="7.3" font-weight="bold" fill="#f0f0f0" text-anchor="start" textLength="35.2" lengthAdjust="spacingAndGlyphs" >(C)X size,[in]</text>
<text x="238.8" y="279.5" font-size="8.4" font-weight="bold" fill="#1fd0e8" text-anchor="middle" >9</text>
<rect x="216" y="286.5" width="45.6" height="14.5" rx="1" fill="#1f1f1f"/>
<text x="129.8" y="296.8" font-size="7.3" font-weight="bold" fill="#f0f0f0" text-anchor="start" textLength="35.2" lengthAdjust="spacingAndGlyphs" >(D)Y size,[in]</text>
<text x="238.8" y="297.1" font-size="8.4" font-weight="bold" fill="#1fd0e8" text-anchor="middle" >9</text>
<rect x="216" y="304.1" width="45.6" height="14.5" rx="1" fill="#1f1f1f"/>
<text x="129.8" y="314.40000000000003" font-size="7.3" font-weight="bold" fill="#f0f0f0" text-anchor="start" textLength="75.1" lengthAdjust="spacingAndGlyphs" >(F)Bolt holes diameter,[in]</text>
<text x="238.8" y="314.70000000000005" font-size="8.4" font-weight="bold" fill="#1fd0e8" text-anchor="middle" >1</text>
<rect x="133.9" y="397.2" width="39.6" height="33.4" rx="1" fill="#505050"/>
<text x="153.70000000000002" y="421" font-size="7.0" font-weight="bold" fill="#f0f0f0" text-anchor="middle" >CLOSE</text>
<text x="153.70000000000002" y="427.3" font-size="7.0" font-weight="bold" fill="#f0f0f0" text-anchor="middle" >TAB</text>
<rect x="178.2" y="397.2" width="39.6" height="33.4" rx="1" fill="#505050"/>
<text x="198.0" y="421" font-size="7.0" font-weight="bold" fill="#f0f0f0" text-anchor="middle" >RESET TO</text>
<text x="198.0" y="427.3" font-size="7.0" font-weight="bold" fill="#f0f0f0" text-anchor="middle" >DEFAULT</text>
<rect x="222.1" y="397.2" width="39.6" height="33.4" rx="1" fill="#505050"/>
<text x="241.9" y="421" font-size="7.0" font-weight="bold" fill="#f0f0f0" text-anchor="middle" >ADD TO</text>
<text x="241.9" y="427.3" font-size="7.0" font-weight="bold" fill="#f0f0f0" text-anchor="middle" >NEST</text>
<path d="M150 403 l8.2 8.2 M158.2 403 l-8.2 8.2" stroke="#fff" stroke-width="2.6"/>
<path d="M237 406.8 h10.4 M242.2 401.3 v10.6" stroke="#fff" stroke-width="2.6"/>
<g fill="none" stroke="#fff" stroke-width="1.9" stroke-linejoin="round"><path d="M201.5 403.8 h-6.8 a1.8 1.8 0 0 0 -1.8 1.8 v1.2"/><path d="M194 410 h6.8 a1.8 1.8 0 0 0 1.8 -1.8 v-1.2"/></g>
<path d="M205 403.8 l-3.6 -2.8 v5.6z M190.6 410 l3.6 -2.8 v5.6z" fill="#fff"/>
</svg></body></html>
